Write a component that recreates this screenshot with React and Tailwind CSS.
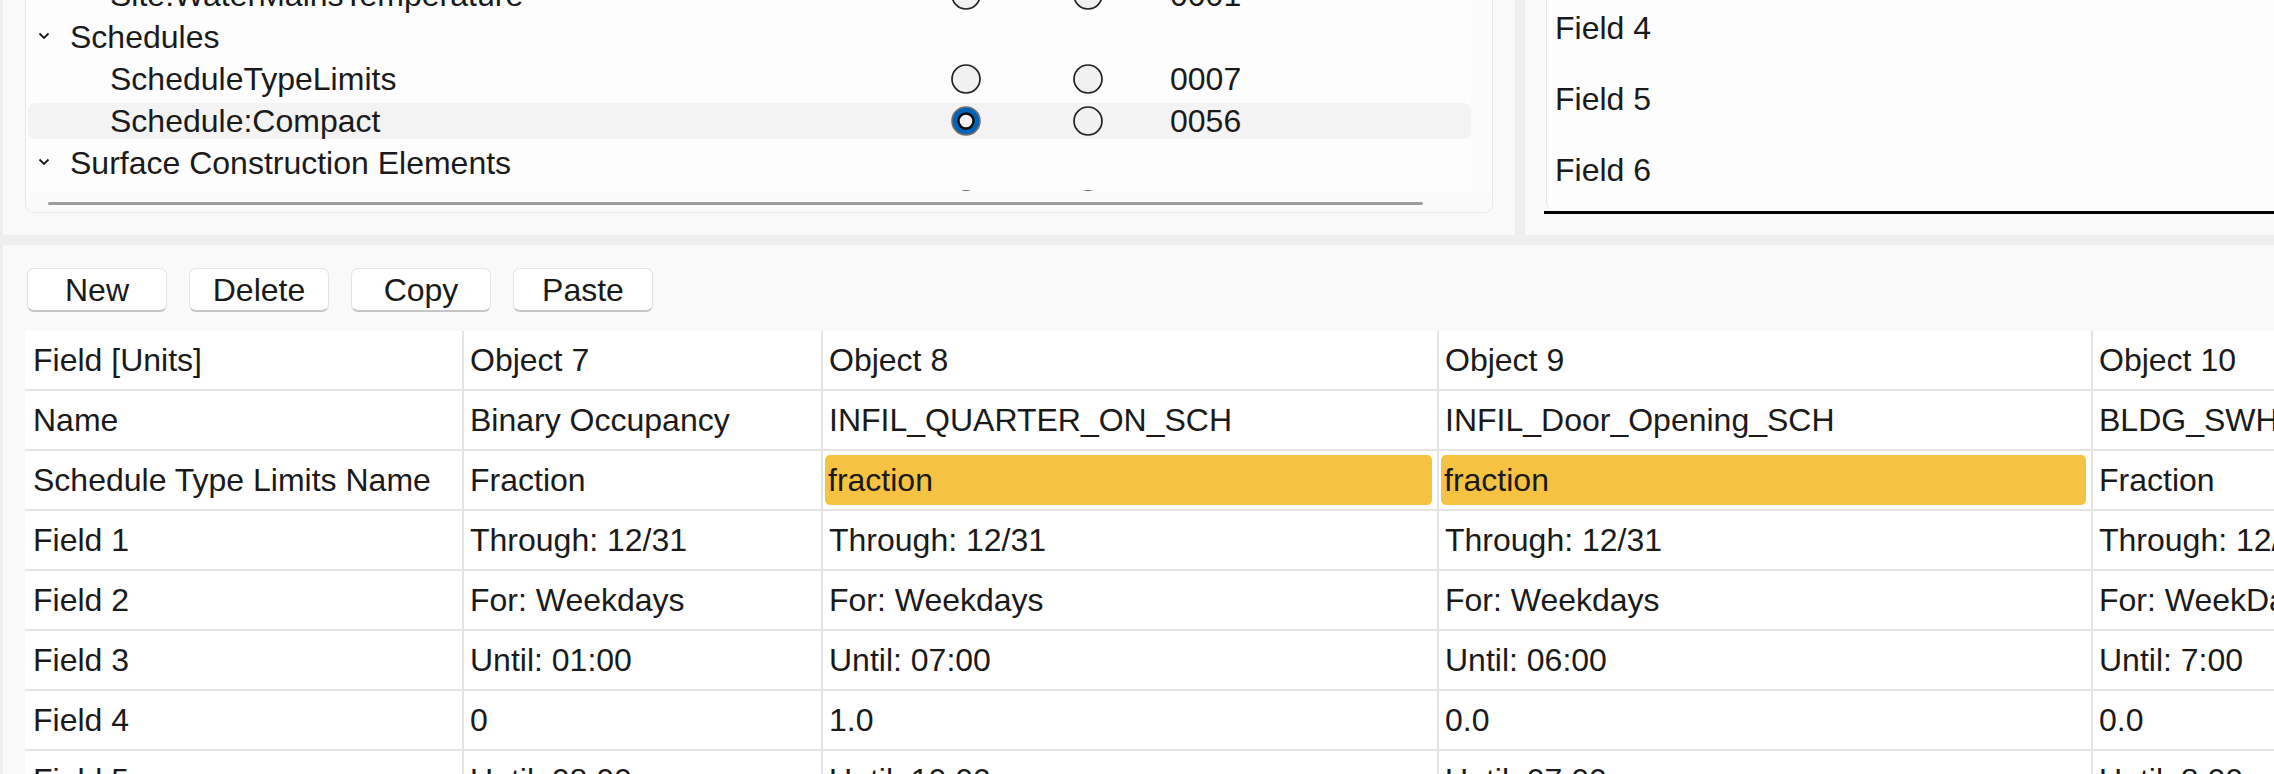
import React from "react";

const treeRows = [
  { label: "Site:WaterMainsTemperature", num: "0001" },
  { label: "Schedules", parent: true },
  { label: "ScheduleTypeLimits", num: "0007" },
  { label: "Schedule:Compact", num: "0056", selected: true },
  { label: "Surface Construction Elements", parent: true },
  { label: "Material", num: "0012" },
];

const columns = [437, 359, 616, 654, 820];

const tableRows = [
  ["Field [Units]", "Object 7", "Object 8", "Object 9", "Object 10"],
  ["Name", "Binary Occupancy", "INFIL_QUARTER_ON_SCH", "INFIL_Door_Opening_SCH", "BLDG_SWH_SCH"],
  ["Schedule Type Limits Name", "Fraction", "fraction", "fraction", "Fraction"],
  ["Field 1", "Through: 12/31", "Through: 12/31", "Through: 12/31", "Through: 12/31"],
  ["Field 2", "For: Weekdays", "For: Weekdays", "For: Weekdays", "For: WeekDays"],
  ["Field 3", "Until: 01:00", "Until: 07:00", "Until: 06:00", "Until: 7:00"],
  ["Field 4", "0", "1.0", "0.0", "0.0"],
  ["Field 5", "Until: 08:00", "Until: 10:00", "Until: 07:00", "Until: 8:00"],
  ["Field 6", "1", "0.25", "1.0", "0.0"],
];

const isChanged = (r, c) => r === 2 && (c === 2 || c === 3);

function Radio({ checked }) {
  if (checked) {
    return (
      <svg width="30" height="30" viewBox="0 0 30 30" className="shrink-0">
        <circle cx="15" cy="15" r="14" fill="#0063b8" stroke="#707070" strokeWidth="1.6" />
        <circle cx="15" cy="15" r="7.5" fill="#f4f4f4" stroke="#0c0c0c" strokeWidth="2.4" />
      </svg>
    );
  }
  return (
    <svg width="30" height="30" viewBox="0 0 30 30" className="shrink-0">
      <circle cx="15" cy="15" r="14" fill="#f1f1f1" stroke="#222222" strokeWidth="1.7" />
    </svg>
  );
}

function Chevron() {
  return (
    <svg width="12" height="8" viewBox="0 0 12 8" className="shrink-0 -mt-[3px]">
      <path d="M1.5 1.5 L6 6 L10.5 1.5" fill="none" stroke="#1a1a1a" strokeWidth="1.8" />
    </svg>
  );
}

function TreeRow({ row }) {
  return (
    <div className="h-[42px] flex items-center">
      <div
        className={`h-[36px] w-full flex items-center rounded-[7px] ${
          row.selected ? "bg-[#f3f3f3]" : ""
        }`}
      >
        {row.parent ? (
          <div className="flex items-center pl-[10px] whitespace-nowrap">
            <Chevron />
            <span className="ml-[20px]">{row.label}</span>
          </div>
        ) : (
          <>
            <div className="w-[923px] shrink-0 pl-[82px] whitespace-nowrap">{row.label}</div>
            <Radio checked={row.selected} />
            <div className="ml-[92px]">
              <Radio />
            </div>
            <span className="ml-[67px]">{row.num}</span>
          </>
        )}
      </div>
    </div>
  );
}

function Cell({ text, col, changed }) {
  const width = columns[col];
  return (
    <div
      style={{ width }}
      className={`shrink-0 h-full flex items-center whitespace-nowrap overflow-hidden ${
        col === 0 ? "pl-[8px]" : "border-l-2 border-[#e4e4e4]"
      } ${changed ? "pl-[2px] pr-[5px] py-[4px]" : col === 0 ? "" : "pl-[6px]"}`}
    >
      {changed ? (
        <div className="w-full h-full flex items-center pl-[3px] bg-[#f5c242] rounded-[5px]">
          {text}
        </div>
      ) : (
        text
      )}
    </div>
  );
}

export default function App() {
  return (
    <div className="w-[2274px] h-[774px] overflow-hidden flex bg-[#efefef] pl-[3px] font-['Liberation_Sans',Arial,sans-serif] text-[32px] text-[#1a1a1a]">
      <div className="flex-1 flex flex-col min-w-0">
        {/* Top: tree + field list */}
        <div className="h-[235px] flex shrink-0">
          <div className="w-[1512px] shrink-0 bg-[#f9f9f9] px-[22px]">
            <div className="h-[213px] bg-[#fdfdfd] border-x border-b border-[#e6e6e6] rounded-b-[9px] flex flex-col overflow-hidden">
              <div className="h-[191px] flex shrink-0">
                <div className="w-[1445px] shrink-0 overflow-hidden pl-[2px]">
                  <div className="-mt-[26px]">
                    {treeRows.map((row, i) => (
                      <TreeRow key={i} row={row} />
                    ))}
                  </div>
                </div>
                <div className="flex-1 bg-[#fbfbfb]" />
              </div>
              <div className="flex-1 bg-[#fafafa] pt-[11px] pl-[22px]">
                <div className="w-[1375px] h-[3px] rounded-full bg-[#9c9c9c]" />
              </div>
            </div>
          </div>
          <div className="w-[10px] shrink-0 bg-[#efefef]" />
          <div className="flex-1 bg-[#f9f9f9] pl-[21px] overflow-hidden">
            <div className="h-[211px] bg-[#fdfdfd] border-l border-[#e6e6e6] rounded-bl-[9px] overflow-hidden">
              <div className="-mt-[8px]">
                {["Field 4", "Field 5", "Field 6"].map((f) => (
                  <div key={f} className="h-[71px] flex items-center pl-[8px]">
                    {f}
                  </div>
                ))}
              </div>
            </div>
            <div className="h-[3px] -ml-[2px] bg-black" />
          </div>
        </div>

        {/* Splitter */}
        <div className="h-[10px] shrink-0 bg-[#efefef]" />

        {/* Bottom: object editor */}
        <div className="flex-1 bg-[#f9f9f9] pl-[22px] pt-[23px] overflow-hidden">
          <div className="flex gap-[22px] ml-[2px]">
            {["New", "Delete", "Copy", "Paste"].map((b) => (
              <button
                key={b}
                className="w-[140px] h-[44px] bg-white border border-[#e3e3e3] border-b-2 border-b-[#c6c6c6] rounded-[7px] flex items-center justify-center"
              >
                {b}
              </button>
            ))}
          </div>

          <div className="mt-[19px] bg-white w-max">
            {tableRows.map((row, r) => (
              <div key={r} className="h-[60px] flex border-b-2 border-[#e4e4e4]">
                {row.map((text, c) => (
                  <Cell key={c} text={text} col={c} changed={isChanged(r, c)} />
                ))}
              </div>
            ))}
          </div>
        </div>
      </div>
    </div>
  );
}
